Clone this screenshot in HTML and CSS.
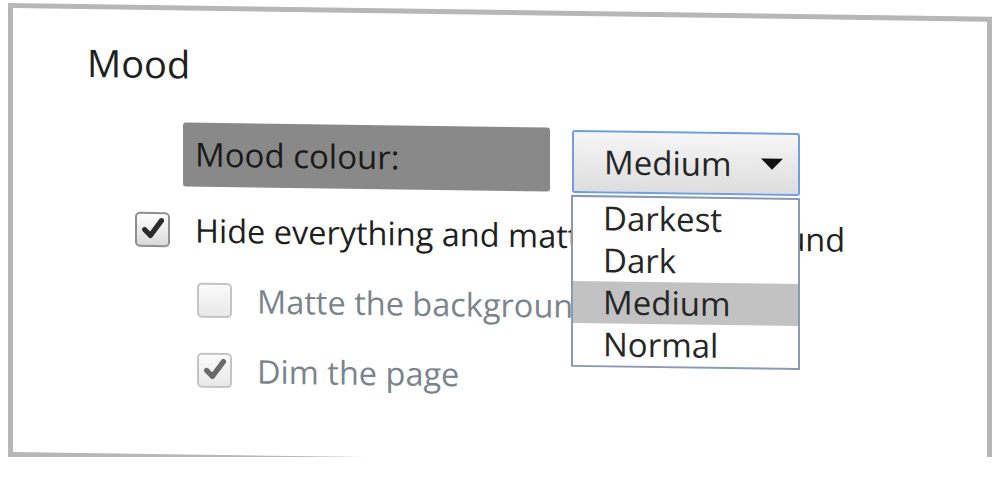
FILE: index.html
```html
<!DOCTYPE html>
<html lang="en">
<head>
  <meta charset="UTF-8">
  <title>Mood settings</title>
  <link rel="stylesheet" href="styles.css">
</head>
<body>
  <!-- mood panel -->
  <div class="panel">
    <h2 class="panel-title">Mood</h2>

    <div class="colour-row">
      <span class="colour-label">Mood colour:</span>
      <div class="select-wrap">
        <div class="select-box">
          <span class="select-value">Medium</span>
          <span class="select-arrow"></span>
        </div>
        <ul class="select-list">
          <li class="select-item">Darkest</li>
          <li class="select-item">Dark</li>
          <li class="select-item selected">Medium</li>
          <li class="select-item">Normal</li>
        </ul>
      </div>
    </div>

    <div class="check-group">
      <label class="check-row">
        <span class="checkbox checked">
          <svg viewBox="0 0 20 20"><path d="M3.5 10.5 L8 15 L16.5 3.5" /></svg>
        </span>
        <span class="check-text">Hide everything and matte the background</span>
      </label>
      <label class="check-row sub disabled">
        <span class="checkbox"></span>
        <span class="check-text">Matte the background</span>
      </label>
      <label class="check-row sub disabled">
        <span class="checkbox checked">
          <svg viewBox="0 0 20 20"><path d="M3.5 10.5 L8 15 L16.5 3.5" /></svg>
        </span>
        <span class="check-text">Dim the page</span>
      </label>
    </div>
  </div>
</body>
</html>
```

FILE: styles.css
```css
body {
  margin: 0;
  background: #fff;
  font-family: 'Open Sans', 'Noto Sans', Arial, sans-serif;
  color: #1f1f1f;
  overflow: hidden;
}
.panel {
  position: relative;
  box-sizing: border-box;
  width: 984px;
  height: 454px;
  margin: 3px 0 0 8px;
  border: 5px solid #b7b7b7;
  padding: 30px 0 0 0;
  transform: skewY(0.8deg);
  transform-origin: 0 0;
}
.panel-title {
  margin: 0;
  padding-left: 74px;
  font-size: 38px;
  line-height: 46px;
  font-weight: 400;
  color: #202020;
}
.colour-row {
  display: flex;
  align-items: flex-start;
  gap: 22px;
  margin: 36px 0 0 170px;
}
.colour-label {
  width: 355px;
  height: 64px;
  padding-left: 12px;
  background: #898989;
  font-size: 33px;
  line-height: 64px;
  color: #1a1a1a;
  border-radius: 3px;
}
.select-wrap {
  position: relative;
}
.select-box {
  box-sizing: border-box;
  display: flex;
  align-items: center;
  width: 228px;
  height: 63px;
  margin-top: 2px;
  padding: 0 15px 0 30px;
  border: 2px solid #6f9fe2;
  border-radius: 3px;
  background: linear-gradient(#f6f6f6, #dddddd);
}
.select-value {
  flex: 1;
  font-size: 33px;
  color: #262626;
}
.select-arrow {
  width: 0;
  height: 0;
  border-left: 11px solid transparent;
  border-right: 11px solid transparent;
  border-top: 11px solid #111;
}
.select-list {
  position: absolute;
  top: 67px;
  left: -1px;
  width: 229px;
  margin: 0;
  padding: 0;
  list-style: none;
  background: #fff;
  border: 2px solid #8a9ab4;
  box-sizing: border-box;
  z-index: 5;
}
.select-item {
  height: 42px;
  padding-left: 30px;
  font-size: 33px;
  line-height: 42px;
  color: #262626;
}
.select-item.selected {
  background: #c2c2c2;
}
.check-group {
  margin-top: 7px;
}
.check-row {
  display: flex;
  align-items: center;
  gap: 25px;
  height: 70px;
  margin-left: 122px;
}
.check-row.sub {
  margin-left: 184px;
}
.checkbox {
  box-sizing: border-box;
  display: flex;
  align-items: center;
  justify-content: center;
  width: 35px;
  height: 35px;
  border: 2px solid #8e8e8e;
  border-radius: 5px;
  background: linear-gradient(#ffffff, #dadada);
}
.checkbox svg {
  width: 26px;
  height: 26px;
  fill: none;
  stroke: #2b2b2b;
  stroke-width: 4;
  stroke-linecap: round;
  stroke-linejoin: round;
}
.check-text {
  font-size: 32.5px;
  color: #1f1f1f;
  white-space: nowrap;
}
.check-row.disabled .checkbox {
  border-color: #c4c4c4;
  background: linear-gradient(#fbfbfb, #e8e8e8);
}
.check-row.disabled .checkbox svg {
  stroke: #6a6a6a;
}
.check-row.disabled .check-text {
  color: #7b838d;
}
```
